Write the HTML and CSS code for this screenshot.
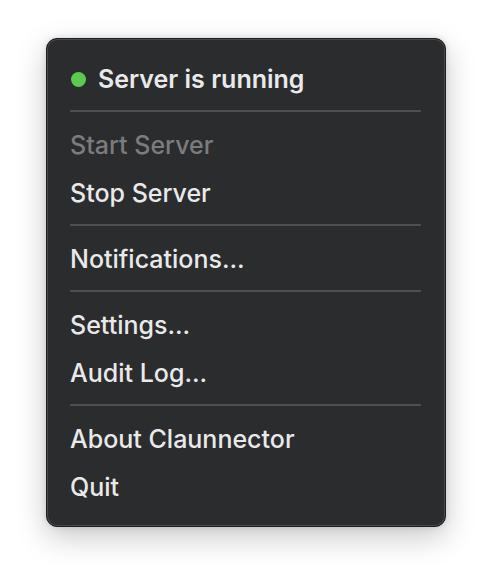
FILE: index.html
```html
<!DOCTYPE html>
<html>
<head>
<meta charset="utf-8">
<link rel="stylesheet" href="styles.css">
</head>
<body>
<div class="menu">
  <div class="item status"><span class="dot"></span><span>Server is running</span></div>
  <div class="sep"></div>
  <div class="item disabled">Start Server</div>
  <div class="item">Stop Server</div>
  <div class="sep"></div>
  <div class="item">Notifications...</div>
  <div class="sep"></div>
  <div class="item">Settings...</div>
  <div class="item">Audit Log...</div>
  <div class="sep"></div>
  <div class="item">About Claunnector</div>
  <div class="item">Quit</div>
</div>
</body>
</html>
```
FILE: styles.css
```css
html, body {
  margin: 0;
  padding: 0;
  background: #ffffff;
}
body {
  width: 492px;
  height: 580px;
  padding-top: 38px;
  padding-left: 46px;
  box-sizing: border-box;
  font-family: Inter, "Noto Sans", sans-serif;
}
.menu {
  width: 400px;
  box-sizing: border-box;
  background: #2b2c2e;
  border: 1px solid #1c1c1d;
  border-radius: 11px;
  box-shadow: inset 0 0 0 1px #4a4b4d, 0 10px 30px rgba(0,0,0,0.22), 0 0 6px rgba(0,0,0,0.12);
  padding: 16px 24px 15px 23px;
}
.item {
  height: 48px;
  display: flex;
  align-items: center;
  color: #e9e9ea;
  font-size: 25px;
  font-weight: 500;
}
.item.disabled {
  color: #7b7c7e;
}
.status {
  font-weight: 600;
}
.dot {
  width: 15px;
  height: 15px;
  border-radius: 50%;
  background: #5fc850;
  margin-left: 1px;
  margin-right: 12px;
}
.sep {
  height: 2px;
  background: #4e4f51;
  margin: 7px 0 9px 0;
}
```
